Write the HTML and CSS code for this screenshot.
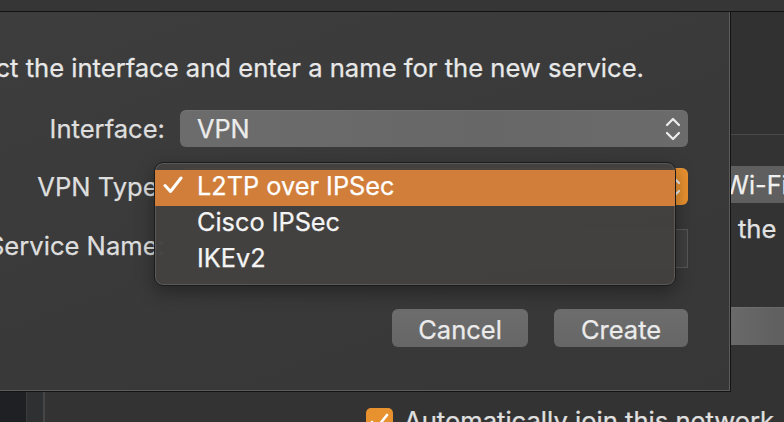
FILE: index.html
```html
<!DOCTYPE html>
<html lang="en">
<head>
<meta charset="utf-8">
<title>New Service</title>
<link rel="stylesheet" href="styles.css">
</head>
<body>
<div class="window">
  <div class="titlebar"></div>
  <div class="middle">
    <div class="sheet">
      <p class="title">Select the interface and enter a name for the new service.</p>
      <div class="form">
        <span class="label">Interface:</span>
        <div class="popup">
          <span class="popup-text">VPN</span>
          <svg class="stepper" viewBox="0 0 16 24" width="16" height="24"><path d="M2 8 L8 2 L14 8 M2 16 L8 22 L14 16"/></svg>
        </div>
        <span class="label">VPN Type:</span>
        <div class="popup popup-active">
          <span class="popup-text">L2TP over IPSec</span>
          <svg class="stepper" viewBox="0 0 16 24" width="16" height="24"><path d="M2 8 L8 2 L14 8 M2 16 L8 22 L14 16"/></svg>
        </div>
        <span class="label">Service Name:</span>
        <div class="field"></div>
      </div>
      <div class="buttons">
        <button class="btn btn-cancel">Cancel</button>
        <button class="btn btn-create">Create</button>
      </div>
      <div class="menu">
        <div class="menu-item selected">
          <svg class="check" viewBox="0 0 20 18" width="20" height="18"><path d="M2 9.5 L7.5 15.5 L18 2"/></svg>
          <span>L2TP over IPSec</span>
        </div>
        <div class="menu-item"><span>Cisco IPSec</span></div>
        <div class="menu-item"><span>IKEv2</span></div>
      </div>
    </div>
    <div class="side">
      <div class="side-top"></div>
      <div class="side-popup"><span>Wi-Fi</span></div>
      <p class="side-text">the IP address</p>
      <div class="side-button"></div>
    </div>
  </div>
  <div class="bottom">
    <div class="source-list"></div>
    <div class="source-gutter"></div>
    <div class="bottom-content">
      <span class="checkbox">
        <svg viewBox="0 0 27 27" width="27" height="27"><path d="M6 14 L11 19.5 L21 7"/></svg>
      </span>
      <span class="checkbox-label">Automatically join this network</span>
    </div>
  </div>
</div>
</body>
</html>
```

FILE: styles.css
```css
html, body {
  margin: 0;
  padding: 0;
  width: 784px;
  height: 422px;
  overflow: hidden;
  background: #333333;
}

.window {
  width: 784px;
  height: 422px;
  display: flex;
  flex-direction: column;
  font-family: Inter, "Liberation Sans", Arial, sans-serif;
  color: #e2e2e2;
  -webkit-text-stroke: 0.25px currentColor;
  overflow: hidden;
}

.titlebar {
  height: 11px;
  flex: none;
  background: #363636;
  border-bottom: 1px solid #121212;
}

.middle {
  display: flex;
  height: 380px;
  flex: none;
}

/* ---------- sheet ---------- */
.sheet {
  position: relative;
  width: 731px;
  flex: none;
  box-sizing: border-box;
  padding-top: 40px;
  background: linear-gradient(160deg, #3d3d3d 0%, #393939 60%, #373737 100%);
  border-right: 1px solid #141414;
  border-bottom: 1px solid #141414;
  box-shadow: inset -1px -1px 0 #5b5b5b;
}

.title {
  margin: 0 0 26px -57px;
  font-size: 25.6px;
  line-height: 32px;
  white-space: nowrap;
  color: #e8e8e8;
}

.form {
  display: grid;
  grid-template-columns: 165px 508px;
  grid-template-rows: 37px 37px 39px;
  column-gap: 15px;
  row-gap: 21px;
  align-items: center;
}

.label {
  justify-self: end;
  font-size: 25.6px;
  line-height: 32px;
  white-space: nowrap;
  color: #dedede;
}

.popup {
  height: 37px;
  box-sizing: border-box;
  border-radius: 6px;
  background: linear-gradient(90deg, #6c6c6c 0%, #676767 60%, #6b6b6b 100%);
  box-shadow: inset 0 1px 0 rgba(255,255,255,0.06);
  display: flex;
  align-items: center;
  justify-content: space-between;
  padding: 0 7px 0 17px;
}

.popup-text {
  font-size: 25.3px;
  line-height: 32px;
  color: #ececec;
}

.popup-active {
  background: #e8912f;
}

.stepper {
  display: block;
}

.stepper path {
  fill: none;
  stroke: #ededed;
  stroke-width: 2.2;
  stroke-linecap: round;
  stroke-linejoin: round;
}

.field {
  align-self: stretch;
  margin-top: 3px;
  margin-bottom: -3px;
  box-sizing: border-box;
  background: #3f3f3f;
  border: 1px solid #575757;
}

.buttons {
  display: flex;
  justify-content: flex-end;
  gap: 26px;
  width: 688px;
  margin-top: 44px;
}

.btn {
  height: 38px;
  box-sizing: border-box;
  border: none;
  border-radius: 6px;
  background: linear-gradient(180deg, #6d6d6d 0%, #666666 100%);
  color: #ebebeb;
  -webkit-text-stroke: 0.25px currentColor;
  font-family: Inter, "Liberation Sans", Arial, sans-serif;
  font-size: 25.5px;
  line-height: 32px;
  padding: 3px 0 0 0;
}

.btn-cancel { width: 136px; }
.btn-create { width: 134px; }

/* ---------- pop-up menu ---------- */
.menu {
  position: absolute;
  left: 154px;
  top: 150px;
  width: 522px;
  box-sizing: border-box;
  padding: 7px 0;
  border-radius: 9px;
  border: 1px solid #1b1b1b;
  background: rgba(67, 65, 64, 0.97);
  box-shadow: inset 0 0 0 1px rgba(255,255,255,0.13), 0 6px 18px rgba(0,0,0,0.35);
}

.menu-item {
  position: relative;
  height: 36px;
  box-sizing: border-box;
  padding: 0 0 4px 42px;
  font-size: 25.3px;
  line-height: 32px;
  color: #f4f4f4;
  white-space: nowrap;
}

.menu-item.selected {
  background: #d17e3b;
  color: #ffffff;
}

.check {
  position: absolute;
  left: 8px;
  top: 6px;
}

.check path {
  fill: none;
  stroke: #ffffff;
  stroke-width: 3;
  stroke-linecap: round;
  stroke-linejoin: round;
}

/* ---------- window behind, right part ---------- */
.side {
  flex: 1;
  display: flex;
  flex-direction: column;
  overflow: hidden;
  background: #333333;
}

.side-top {
  height: 122px;
  flex: none;
  background: #313131;
  border-bottom: 1px solid #4a4a4a;
}

.side-popup {
  margin: 31px 0 0 -30px;
  height: 37px;
  width: 140px;
  flex: none;
  border-radius: 6px;
  background: #5f5f5f;
  display: flex;
  align-items: center;
  padding-left: 23px;
  font-size: 25.3px;
  color: #f0f0f0;
  white-space: nowrap;
}

.side-text {
  margin: 10px 0 0 7px;
  font-size: 25.6px;
  line-height: 32px;
  color: #e2e2e2;
  white-space: nowrap;
}

.side-button {
  margin: 62px 0 0 -20px;
  height: 38px;
  width: 160px;
  flex: none;
  border-radius: 6px;
  background: linear-gradient(90deg, #6e6e6e 0%, #606060 40%, #5f5f5f 100%);
  box-shadow: inset 0 1px 0 rgba(255,255,255,0.06);
}

/* ---------- window behind, bottom ---------- */
.bottom {
  flex: 1;
  display: flex;
  background: #333333;
}

.source-list {
  width: 26px;
  flex: none;
  background: #1f2023;
  border-right: 1px solid #3b3b3d;
}

.source-gutter {
  width: 16px;
  flex: none;
  background: #2f3032;
  border-right: 2px solid #464646;
}

.bottom-content {
  flex: 1;
  display: flex;
  align-items: flex-start;
  padding: 16px 0 0 321px;
  gap: 11px;
  white-space: nowrap;
}

.checkbox {
  width: 27px;
  height: 27px;
  flex: none;
  border-radius: 5px;
  background: #e8912f;
  display: block;
}

.checkbox svg {
  display: block;
}

.checkbox path {
  fill: none;
  stroke: #ffffff;
  stroke-width: 2.6;
  stroke-linecap: round;
  stroke-linejoin: round;
}

.checkbox-label {
  font-size: 25.6px;
  line-height: 32px;
  margin-top: -3px;
  color: #e0e0e0;
}
```
